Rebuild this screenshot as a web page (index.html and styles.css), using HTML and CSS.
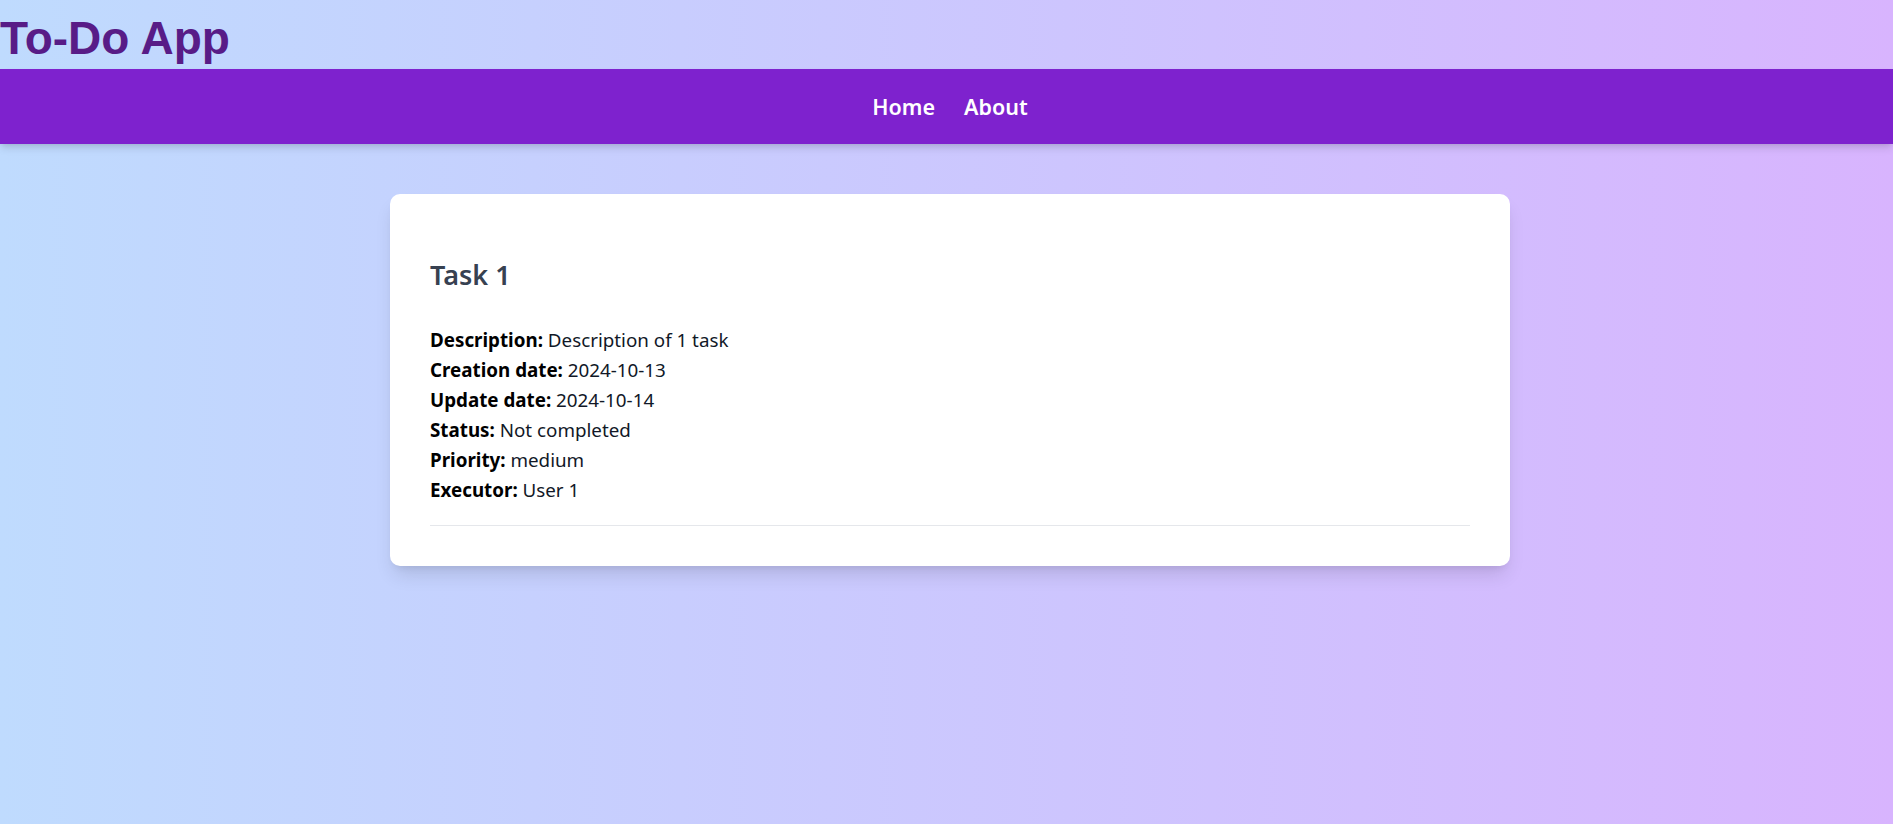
FILE: index.html
```html
<!DOCTYPE html>
<html lang="en">
<head>
<meta charset="utf-8">
<title>To-Do App</title>
<link rel="stylesheet" href="styles.css">
</head>
<body>
<header class="app-header">
  <h1 class="app-title">To-Do App</h1>
</header>
<nav class="navbar">
  <a class="nav-link" href="#">Home</a>
  <a class="nav-link" href="#">About</a>
</nav>
<main class="content">
  <section class="card">
    <article class="task">
      <h2 class="task-title">Task 1</h2>
      <div class="task-fields">
        <p class="field"><strong>Description:</strong> Description of 1 task</p>
        <p class="field"><strong>Creation date:</strong> 2024-10-13</p>
        <p class="field"><strong>Update date:</strong> 2024-10-14</p>
        <p class="field"><strong>Status:</strong> Not completed</p>
        <p class="field"><strong>Priority:</strong> medium</p>
        <p class="field"><strong>Executor:</strong> User 1</p>
      </div>
    </article>
  </section>
</main>
</body>
</html>
```

FILE: styles.css
```css
* {
  box-sizing: border-box;
}

html, body {
  margin: 0;
  padding: 0;
}

body {
  min-height: 824px;
  background: linear-gradient(to right, #bfdbfe, #d8b4fe);
  font-family: "Noto Sans", "Open Sans", sans-serif;
  color: #111827;
}

.app-header {
  height: 69px;
}

.app-title {
  margin: 0;
  padding-top: 13px;
  font-family: "Liberation Sans", Arial, sans-serif;
  font-weight: 700;
  font-size: 46px;
  line-height: 50px;
  color: #581c87;
}

.navbar {
  height: 75px;
  padding-left: 7px;
  background: #7e22ce;
  display: flex;
  justify-content: center;
  align-items: center;
  gap: 29px;
  box-shadow: 0 5px 8px -1px rgba(0, 0, 0, 0.12), 0 2px 5px -2px rgba(0, 0, 0, 0.1);
}

.nav-link {
  color: #ffffff;
  text-decoration: none;
  font-weight: 600;
  font-size: 21.5px;
  line-height: 28px;
}

.content {
  display: flex;
  justify-content: center;
  padding-top: 50px;
  padding-left: 7px;
}

.card {
  width: 1120px;
  background: #ffffff;
  border-radius: 10px;
  padding: 0 40px 40px;
  box-shadow: 0 12px 19px -4px rgba(0, 0, 0, 0.12), 0 5px 8px -5px rgba(0, 0, 0, 0.1);
}

.task {
  padding: 21px 0 20px;
  border-bottom: 1px solid #e5e7eb;
  margin-top: 40px;
}

.task-title {
  margin: 0 0 30px;
  font-size: 27px;
  line-height: 40px;
  font-weight: 600;
  color: #374151;
}

.field {
  margin: 0;
  font-size: 18.8px;
  line-height: 30px;
  color: #111827;
}

.field strong {
  font-weight: 700;
  color: #000000;
}
```
